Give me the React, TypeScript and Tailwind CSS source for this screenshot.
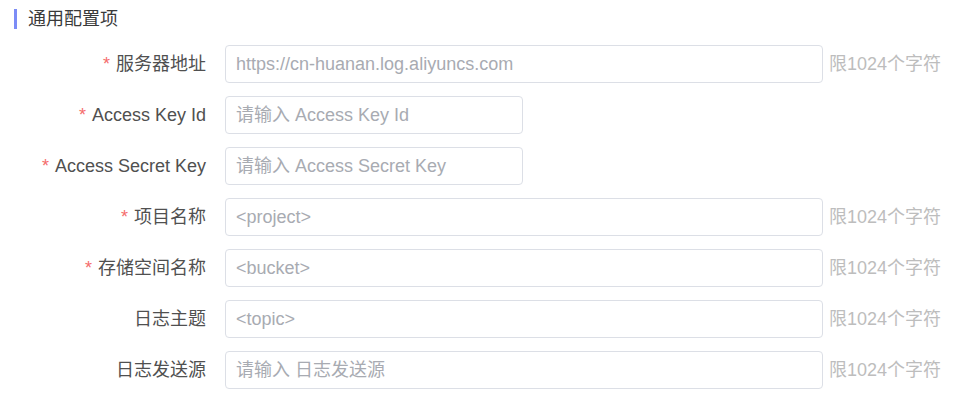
import React from "react"

interface FieldItem {
  id: string
  label: string
  required: boolean
  placeholder: string
  wide: boolean
}

const fields: FieldItem[] = [
  { id: "endpoint", label: "服务器地址", required: true, placeholder: "https://cn-huanan.log.aliyuncs.com", wide: true },
  { id: "keyId", label: "Access Key Id", required: true, placeholder: "请输入 Access Key Id", wide: false },
  { id: "secret", label: "Access Secret Key", required: true, placeholder: "请输入 Access Secret Key", wide: false },
  { id: "project", label: "项目名称", required: true, placeholder: "<project>", wide: true },
  { id: "bucket", label: "存储空间名称", required: true, placeholder: "<bucket>", wide: true },
  { id: "topic", label: "日志主题", required: false, placeholder: "<topic>", wide: true },
  { id: "source", label: "日志发送源", required: false, placeholder: "请输入 日志发送源", wide: true },
]

// faint watermark pieces laid over the form
const marks = [
  { text: "2025年1月14", left: 425, top: 4 },
  { text: "14:05:51 +8", left: 668, top: 80 },
  { text: "14 14:05", left: 4, top: 100 },
  { text: "sunxs", left: 415, top: 238 },
  { text: "2025年1月14 14:05", left: 428, top: 282 },
]

export default function App() {
  return (
    <div
      className="relative w-[979px] h-[406px] overflow-hidden bg-white"
      style={{ fontFamily: '"Liberation Sans", "Noto Sans CJK SC", sans-serif' }}
    >
      {/* Section title */}
      <div className="flex items-center pl-[14px] pt-[9px]">
        <div className="w-[3px] h-[20px] bg-[#7c8cf6]"></div>
        <span className="ml-[11px] text-[18px] leading-[20px] text-[#3a3a3a]">通用配置项</span>
      </div>

      {/* Form */}
      <div className="mt-[16px] flex flex-col gap-[13px]">
        {fields.map((f) => (
          <div key={f.id} className="flex items-center h-[38px]">
            <label className="w-[206px] text-right text-[18px] text-[#505050] whitespace-nowrap">
              {f.required && <span className="text-[#f56c6c] mr-[6px]">*</span>}
              {f.label}
            </label>
            <input
              className={`ml-[19px] h-[38px] border border-[#dcdfe6] rounded-[4px] px-[10px] text-[18px] text-[#606266] placeholder:text-[#a8abb2] outline-none bg-transparent ${
                f.wide ? "w-[598px]" : "w-[298px]"
              }`}
              placeholder={f.placeholder}
            />
            {f.wide && <span className="ml-[6px] text-[18px] text-[#bdbdbd] whitespace-nowrap">限1024个字符</span>}
          </div>
        ))}
      </div>

      {/* Watermark */}
      <div className="pointer-events-none absolute inset-0" aria-hidden="true">
        {marks.map((m, i) => (
          <span
            key={i}
            className="absolute text-[44px] whitespace-nowrap text-[#000]/[0.025] -rotate-[15deg] origin-bottom-left"
            style={{ left: m.left, top: m.top }}
          >
            {m.text}
          </span>
        ))}
      </div>
    </div>
  )
}
